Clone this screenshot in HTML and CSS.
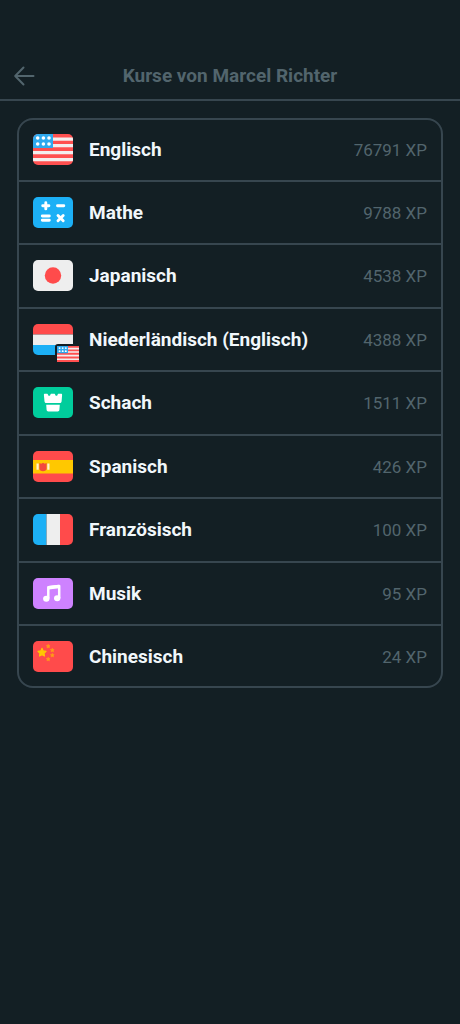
FILE: index.html
```html
<!DOCTYPE html>
<html lang="de">
<head>
<meta charset="utf-8">
<meta name="viewport" content="width=device-width, initial-scale=1">
<title>Kurse von Marcel Richter</title>
<link rel="stylesheet" href="styles.css">
</head>
<body>
<svg width="0" height="0" class="defs" aria-hidden="true">
  <defs>
    <clipPath id="round"><rect width="40" height="31" rx="5"/></clipPath>
    <path id="star" d="M0-1L.29-.4.95-.31.48.15.59.81 0 .5-.59.81-.48.15-.95-.31-.29-.4Z"/>
    <symbol id="us" viewBox="0 0 40 31" preserveAspectRatio="none">
      <path fill="#ff5050" d="M0 0h40v31H0z"/>
      <path fill="#f3eeee" d="M20 3.5h20v3.2H20zM20 10h20v3.2H20zM0 17h40v3.2H0zM0 24h40v3.2H0z"/>
      <path fill="#2fa9ee" d="M0 0h20v14H0z"/>
      <g fill="#fff"><circle cx="4.7" cy="4" r="1.8"/><circle cx="10.4" cy="4" r="1.8"/><circle cx="16" cy="4" r="1.8"/><circle cx="4.7" cy="10" r="1.8"/><circle cx="10.4" cy="10" r="1.8"/><circle cx="16" cy="10" r="1.8"/></g>
    </symbol>
  </defs>
</svg>
<header class="topbar">
  <button class="back" type="button" aria-label="Zurück">
    <svg width="22" height="22" viewBox="0 0 22 22"><path d="M10.500 2.500L2.200 11l8.300 8.500M2.400 11H20.500"/></svg>
  </button>
  <h1 class="title">Kurse von Marcel Richter</h1>
</header>
<main class="page">
  <ul class="courses">
    <li class="course">
      <svg class="flag" viewBox="0 0 40 31"><g clip-path="url(#round)"><use href="#us" width="40" height="31"/></g></svg>
      <span class="name">Englisch</span><span class="xp">76791 XP</span>
    </li>
    <li class="course">
      <svg class="flag" viewBox="0 0 40 31"><rect width="40" height="31" rx="5" fill="#1cb0f6"/><path d="M12.800 5.700v6.200M9.700 8.800h6.200M24.500 8.800h6.300M9.300 19h7M9.300 23.300h7M25 18.500l5.200 5.200M30.200 18.500L25 23.700" fill="none" stroke="#fff" stroke-width="2.900" stroke-linecap="round"/></svg>
      <span class="name">Mathe</span><span class="xp">9788 XP</span>
    </li>
    <li class="course">
      <svg class="flag" viewBox="0 0 40 31"><rect width="40" height="31" rx="5" fill="#eee"/><circle cx="20" cy="15.500" r="8.200" fill="#ff4b4b"/></svg>
      <span class="name">Japanisch</span><span class="xp">4538 XP</span>
    </li>
    <li class="course">
      <span class="flag-stack">
        <svg class="flag" viewBox="0 0 40 31"><g clip-path="url(#round)"><path fill="#ff4b4b" d="M0 0h40v10.500H0z"/><path fill="#eee" d="M0 10.500h40v10.500H0z"/><path fill="#1cb0f6" d="M0 21h40v10H0z"/></g></svg>
        <svg class="flag-badge" viewBox="0 0 26 20"><rect width="26" height="20" rx="3" fill="#131f24"/><use href="#us" x="2" y="2" width="22" height="16"/></svg>
      </span>
      <span class="name">Niederländisch (Englisch)</span><span class="xp">4388 XP</span>
    </li>
    <li class="course">
      <svg class="flag" viewBox="0 0 40 31"><rect width="40" height="31" rx="5" fill="#00cd9c"/><path fill="#fff" d="M12 6.700h1.800c.7 0 1 .3 1.200 1l.3.8c.6.700 1.700.3 2-.6.200-.8.500-1.200 1.200-1.200h2.600c.7 0 1 .4 1.200 1.200.3.900 1.400 1.300 2 .6l.3-.8c.2-.7.500-1 1.200-1H28c.8 0 1.200.5 1.100 1.200l-.5 6.300c-.1 1.200-.7 1.800-1.800 1.800H13.300c-1.100 0-1.700-.6-1.800-1.800l-.6-6.300c-.1-.7.300-1.200 1.100-1.200zM13.200 17.800h13.600l-.4 5c-.1 1-.7 1.700-1.700 1.700h-9.400c-1 0-1.600-.7-1.700-1.700z"/></svg>
      <span class="name">Schach</span><span class="xp">1511 XP</span>
    </li>
    <li class="course">
      <svg class="flag" viewBox="0 0 40 31"><g clip-path="url(#round)"><path fill="#ff4b4b" d="M0 0h40v31H0z"/><path fill="#ffc800" d="M0 9h40v13.500H0z"/><path fill="#fff3d0" d="M3.500 12.500h2.200v6.300H3.500zM14.300 12.500h2.200v6.300h-2.200z"/><path fill="#f34a3e" d="M6.400 12l1.800.8 1.800-1 1.800 1 1.800-.8v5.800c0 1.500-1.700 2.400-3.600 2.400s-3.600-.9-3.600-2.400z"/></g></svg>
      <span class="name">Spanisch</span><span class="xp">426 XP</span>
    </li>
    <li class="course">
      <svg class="flag" viewBox="0 0 40 31"><g clip-path="url(#round)"><path fill="#1cb0f6" d="M0 0h13.500v31H0z"/><path fill="#eee" d="M13.500 0H27v31H13.500z"/><path fill="#ff4b4b" d="M27 0h13v31H27z"/></g></svg>
      <span class="name">Französisch</span><span class="xp">100 XP</span>
    </li>
    <li class="course">
      <svg class="flag" viewBox="0 0 40 31"><rect width="40" height="31" rx="5" fill="#ce82ff"/><g fill="#fff"><ellipse cx="13.300" cy="20.800" rx="3.200" ry="3"/><ellipse cx="24.200" cy="20.300" rx="3.200" ry="3"/></g><path d="M15.300 20.500V9.200L26.200 8v12" fill="none" stroke="#fff" stroke-width="2.500" stroke-linejoin="round"/><path d="M15.500 9.700L26 8.500" stroke="#fff" stroke-width="3.500"/></svg>
      <span class="name">Musik</span><span class="xp">95 XP</span>
    </li>
    <li class="course">
      <svg class="flag" viewBox="0 0 40 31"><rect width="40" height="31" rx="5" fill="#ff4b4b"/><use href="#star" fill="#ffc800" stroke="#ffc800" stroke-width=".25" stroke-linejoin="round" transform="translate(9 11.600) scale(4.300)"/><g fill="#ff9e16" stroke="#ff9e16" stroke-width=".3" stroke-linejoin="round"><use href="#star" transform="translate(15.200 5.300) scale(2)"/><use href="#star" transform="translate(19.300 9.200) scale(2)"/><use href="#star" transform="translate(19.300 14.300) scale(2)"/><use href="#star" transform="translate(15.200 18.200) scale(2)"/></g></svg>
      <span class="name">Chinesisch</span><span class="xp">24 XP</span>
    </li>
  </ul>
</main>
</body>
</html>
```

FILE: styles.css
```css
* {
  box-sizing: border-box;
}

body {
  margin: 0;
  min-height: 100vh;
  background: #131f24;
  color: #f1f7fb;
  font-family: Roboto, "Liberation Sans", sans-serif;
  font-size: 19px;
  line-height: 24px;
}

.defs {
  position: absolute;
}

.topbar {
  display: grid;
  grid-template-columns: 22px 1fr 22px;
  align-items: center;
  padding: 64px 13px 11px;
  border-bottom: 2px solid #37464f;
}

.back {
  display: flex;
  padding: 0;
  border: 0;
  background: none;
  cursor: pointer;
}

.back path {
  fill: none;
  stroke: #52656d;
  stroke-width: 2;
  stroke-linecap: round;
  stroke-linejoin: round;
}

.title {
  margin: 0;
  font-size: 19px;
  font-weight: 700;
  text-align: center;
  color: #52656d;
}

.page {
  padding: 17px;
}

.courses {
  margin: 0;
  padding: 0;
  list-style: none;
  border: 2px solid #37464f;
  border-radius: 16px;
}

.course {
  display: flex;
  align-items: center;
  gap: 16px;
  padding: 15px 14px;
  border-bottom: 2px solid #37464f;
}

.course:nth-child(odd) {
  padding-bottom: 16px;
}

.course:first-child {
  padding-top: 14px;
  padding-bottom: 15px;
}

.course:last-child {
  padding-bottom: 14px;
  border-bottom: 0;
}

.flag {
  display: block;
  flex: none;
  width: 40px;
  height: 31px;
}

.flag-stack {
  position: relative;
  flex: none;
}

.flag-badge {
  position: absolute;
  right: -8px;
  bottom: -9px;
  width: 26px;
  height: 20px;
}

.name {
  flex: 1;
  font-weight: 700;
}

.xp {
  font-size: 17px;
  color: #52656d;
}
```
